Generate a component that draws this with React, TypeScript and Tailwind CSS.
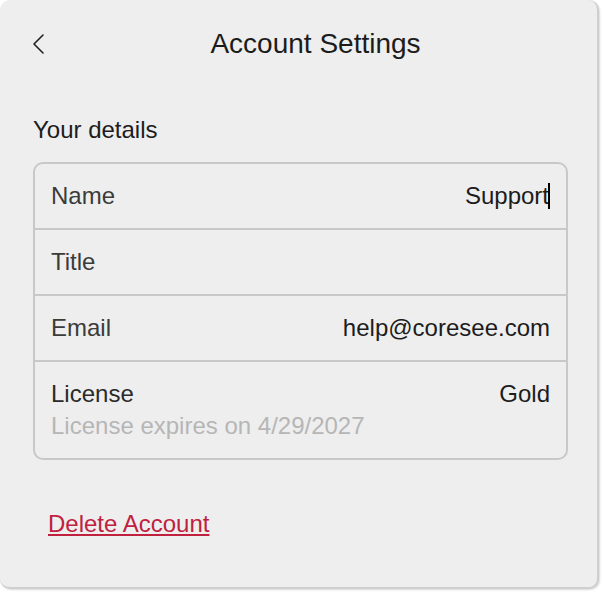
import React from "react";

const rows = [
  { label: "Name", value: "Support", caret: true },
  { label: "Title", value: "" },
  { label: "Email", value: "help@coresee.com" },
];

export default function App() {
  return (
    <div
      className="w-[602px] h-[592px] bg-white"
      style={{ fontFamily: '"Liberation Sans", Arial, sans-serif' }}
    >
      <div className="w-[599px] h-[589px] rounded-[10px] bg-[#eeeeee] border-r-2 border-b-2 border-[#cfcfcf] shadow-[1px_1px_2px_rgba(0,0,0,0.15)] flex flex-col">
        {/* Header */}
        <div className="relative h-[88px] flex items-center justify-center">
          <button className="absolute left-[31px] top-[33px] w-[14px] h-[22px] text-[#222]">
            <svg viewBox="0 0 14 22" className="w-[14px] h-[22px]" fill="none">
              <path d="M12 2 L3 11 L12 20" stroke="currentColor" strokeWidth="1.6" strokeLinecap="round" strokeLinejoin="round" />
            </svg>
          </button>
          <h1 className="text-[28px] text-[#1c1c1c] pl-[34px]">Account Settings</h1>
        </div>

        <div className="px-[33px] pt-[28px]">
          <h2 className="text-[24px] text-[#1c1c1c] leading-[28px]">Your details</h2>

          <div className="mt-[18px] w-[535px] rounded-[10px] border-2 border-[#c8c8c8] flex flex-col">
            {rows.map((r) => (
              <div
                key={r.label}
                className="h-[66px] flex items-center justify-between px-[16px] border-b-2 border-[#c8c8c8]"
              >
                <span className="text-[24px] text-[#3b3b3b]">{r.label}</span>
                <span className="text-[24px] text-[#1c1c1c] flex items-center">
                  {r.value}
                  {r.caret && <span className="inline-block w-[2px] h-[26px] bg-black ml-[-1px]" />}
                </span>
              </div>
            ))}
            <div className="h-[96px] flex flex-col justify-center px-[16px]">
              <div className="flex items-center justify-between leading-[28px]">
                <span className="text-[24px] text-[#2a2a2a]">License</span>
                <span className="text-[24px] text-[#1c1c1c]">Gold</span>
              </div>
              <span className="text-[24px] leading-[28px] text-[#b6b6b6] mt-[4px]">License expires on 4/29/2027</span>
            </div>
          </div>

          <a href="#" className="inline-block mt-[46px] ml-[15px] text-[24px] text-[#c0213f] underline underline-offset-[2px]">
            Delete Account
          </a>
        </div>
      </div>
    </div>
  );
}
